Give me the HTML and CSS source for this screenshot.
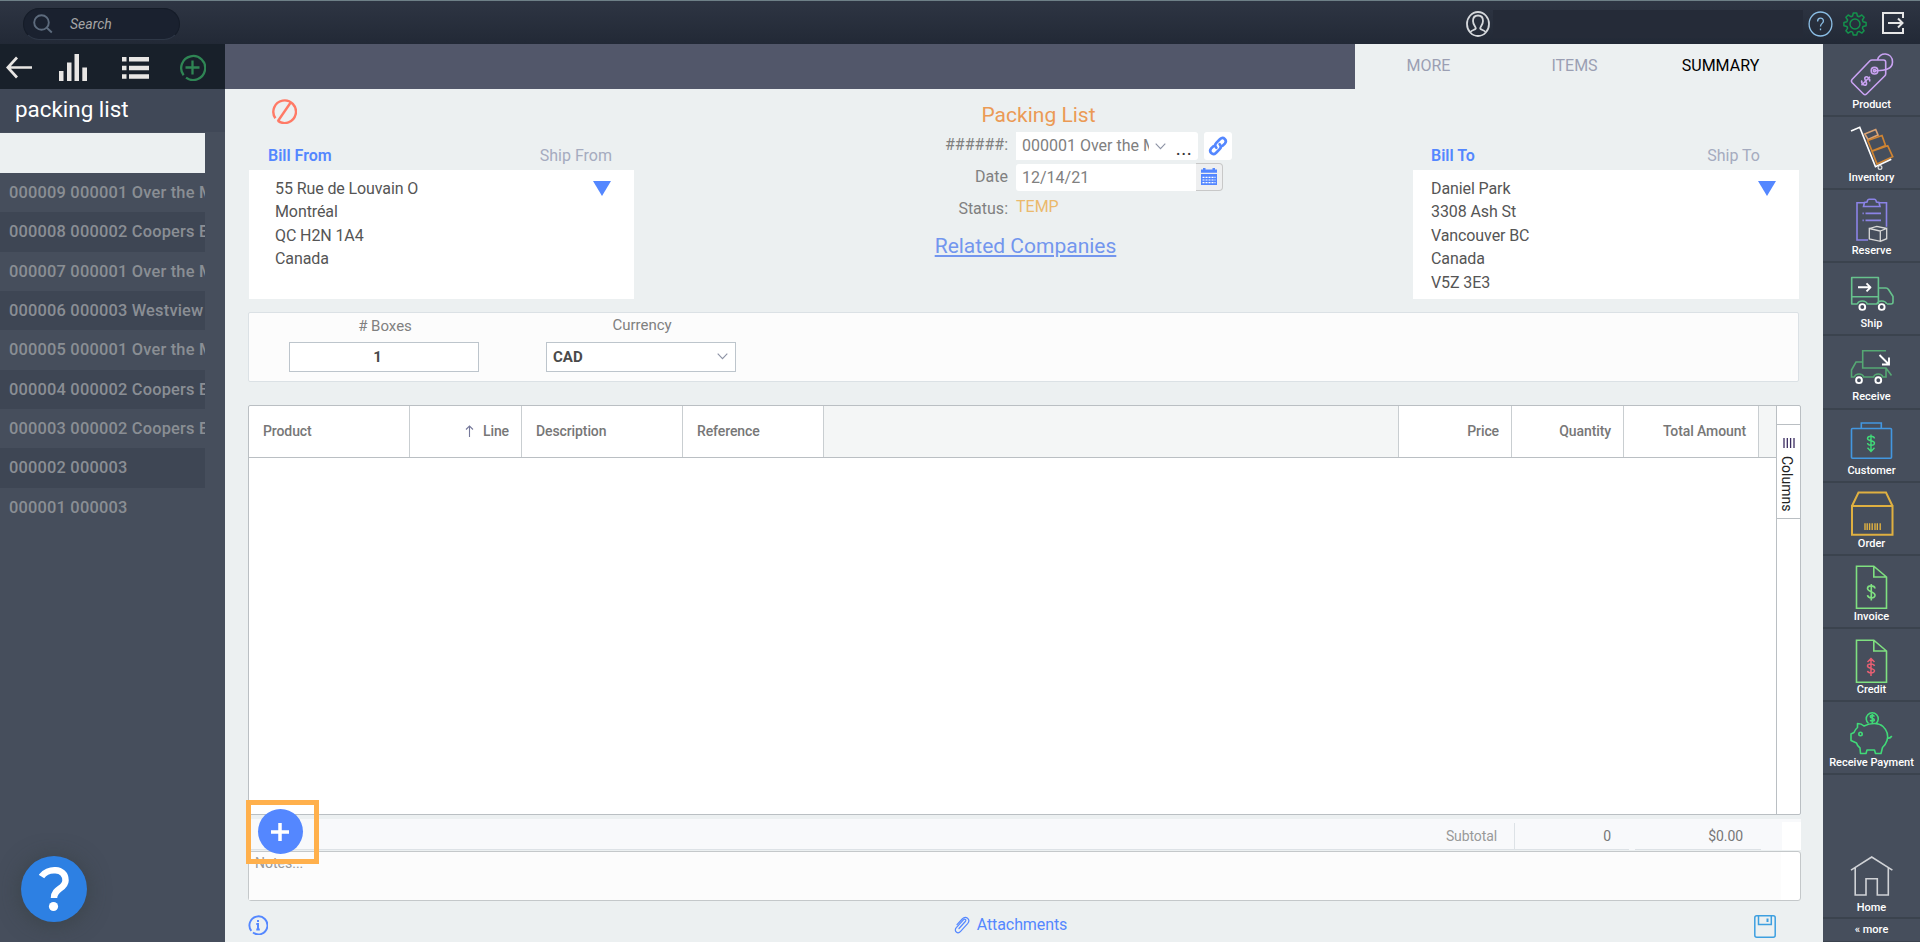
FILE: index.html
```html
<!DOCTYPE html>
<html lang="en">
<head>
    <meta charset="UTF-8">
    <meta name="viewport" content="width=device-width, initial-scale=1.0">
    <title>Packing List</title>
    <link rel="stylesheet" href="styles.css">
</head>
<body>
    <header class="topbar">
        <div class="search">
            <svg width="20" height="20" viewBox="0 0 20 20" fill="none" stroke="#5d6b7d" stroke-width="1.9"><circle cx="8.5" cy="8.5" r="7.3"/><path d="M13.8 13.8l5 4.7"/></svg>
            <span>Search</span>
        </div>
        <svg class="user" width="24" height="26" viewBox="0 0 24 26" fill="none" stroke="#d5d8dc" stroke-width="1.8"><ellipse cx="12" cy="13" rx="11" ry="12"/><path d="M4.500 21c1-2 4.500-2 5.300-3.500.300-1.500-2.800-3.500-2.800-7.500 0-3.500 2-5.500 5-5.500s5 2 5 5.500c0 4-3.100 6-2.800 7.500.800 1.500 4.300 1.500 5.300 3.500"/></svg>
        <div class="account"></div>
        <svg class="top-help" width="25" height="26" viewBox="0 0 25 26" fill="none" stroke="#8cbfe6" stroke-width="1.3"><ellipse cx="12.500" cy="13" rx="11.400" ry="12"/><path d="M9.600 10.400c0-4.300 5.800-4.300 5.800-.500 0 2.500-2.900 2.500-2.900 5.600M12.500 17.500v1.800"/></svg>
        <svg class="gear" width="24" height="24" viewBox="0 0 24 24" fill="none" stroke="#14924c" stroke-width="1.5" stroke-linejoin="round"><circle cx="12" cy="12" r="5"/><path d="M10.300 1h3.400l.7 3 1.700.7L18.800 3l2.300 2.300-1.700 2.700.7 1.700 3 .7v3.300l-3 .7-.7 1.700 1.700 2.700-2.300 2.300-2.700-1.700-1.700.7-.7 3h-3.400l-.7-3-1.700-.7-2.700 1.700-2.300-2.300 1.700-2.700-.7-1.700-3-.7v-3.300l3-.7.7-1.700-1.700-2.700L5.200 3l2.700 1.700 1.700-.7z"/></svg>
        <svg class="exit" width="24" height="24" viewBox="0 0 24 24" fill="none" stroke="#e6e6e6" stroke-width="2"><path d="M22 7V2H2v20h20v-5M7 12h14.500M17 7.500l4.500 4.500-4.500 4.500"/></svg>
    </header>

    <div class="layout">
        <aside class="sidebar">
            <div class="tools">
                <svg width="27" height="23" viewBox="0 0 27 23" fill="none" stroke="#e8e6e4" stroke-width="2.700"><path d="M26 11.500H2M11 1.500L1.800 11.500l9.200 10"/></svg>
                <svg width="28" height="27" viewBox="0 0 28 27" fill="#e8e6e4"><path d="M0 17h4.500v10H0zM8 8.500h4.500V27H8zM15.500 0H20v27h-4.500zM23.300 13.500H28V27h-4.700z"/></svg>
                <svg width="27" height="22" viewBox="0 0 27 22" fill="#e8e6e4"><path d="M0 0h4.500v4.500H0zM7 0h20v4.500H7zM0 8.700h4.500v4.500H0zM7 8.700h20v4.500H7zM0 17.300h4.500v4.500H0zM7 17.300h20v4.500H7z"/></svg>
                <svg width="27" height="27" viewBox="0 0 27 27" fill="none" stroke="#2f8554" stroke-width="2.300"><path d="M4.600 21.200A12 12 0 1 1 7 23.600M13.500 6.500v14M6.500 13.500h14"/></svg>
            </div>
            <h1>packing list</h1>
            <div class="filter"></div>
            <ul class="records">
                <li>000009 000001 Over the M</li>
                <li>000008 000002 Coopers B</li>
                <li>000007 000001 Over the M</li>
                <li>000006 000003 Westview</li>
                <li>000005 000001 Over the M</li>
                <li>000004 000002 Coopers B</li>
                <li>000003 000002 Coopers B</li>
                <li>000002 000003</li>
                <li>000001 000003</li>
            </ul>
            <div class="help-button">
                <svg width="30" height="46" viewBox="0 0 30 46"><path d="M2.500 10.500C8 2 26.500 1 26.500 14.500 26.500 23 15 22 15 32" fill="none" stroke="#fff" stroke-width="6.500"/><circle cx="14.500" cy="40.500" r="4.600" fill="#fff"/></svg>
            </div>
        </aside>

        <main class="main">
            <nav class="tabs">
                <a>MORE</a>
                <a>ITEMS</a>
                <a class="active">SUMMARY</a>
            </nav>

            <section class="doc-head">
                <div class="party from">
                    <div class="party-icon">
                        <svg width="25" height="25" viewBox="0 0 25 25" fill="none" stroke="#ff7a66" stroke-width="2.400"><path d="M3.400 19.200A11.300 11.300 0 1 1 5.800 21.700M5.800 22.300L18.500 3.800"/></svg>
                    </div>
                    <div class="party-tabs"><b>Bill From</b><span>Ship From</span></div>
                    <div class="address">
                        <p>55 Rue de Louvain O<br>Montréal<br>QC H2N 1A4<br>Canada</p>
                        <i class="arrow"></i>
                    </div>
                </div>

                <div class="doc-info">
                    <h2>Packing List</h2>
                    <div class="row">
                        <label>######:</label>
                        <div class="combo">
                            <span class="combo-text">000001 Over the M</span>
                            <svg width="11" height="7" viewBox="0 0 11 7" fill="none" stroke="#8d93a5" stroke-width="1.100"><path d="M.7.7l4.800 5 4.800-5"/></svg>
                            <span class="dots">...</span>
                        </div>
                        <div class="link">
                            <svg width="20" height="20" viewBox="0 0 20 20" fill="none" stroke="#5487ff" stroke-width="2.700" stroke-linecap="round"><path d="M8.300 11.700c-1.400-1.500-1.400-3.400 0-4.800l3.800-3.800c3.300-3 7.500 1.200 4.700 4.500l-2.300 2.300"/><path d="M11.700 8.300c1.400 1.500 1.400 3.400 0 4.800l-3.800 3.800c-3.300 3-7.500-1.200-4.700-4.500l2.300-2.300"/></svg>
                        </div>
                    </div>
                    <div class="row date-row">
                        <label>Date</label>
                        <div class="date">12/14/21</div>
                        <div class="calendar">
                            <svg width="16" height="17" viewBox="0 0 16 17"><path d="M0 1.500h2V0h2.500v1.500h7V0H14v1.500h2v3.200H0zM0 6h16v11H0z" fill="#5487ff"/><path d="M1.500 9.300h13M1.500 12h13M1.500 14.700h13" stroke="#fff" stroke-width="1.200" stroke-dasharray="2 1"/></svg>
                        </div>
                    </div>
                    <div class="row status-row">
                        <label>Status:</label>
                        <span class="status">TEMP</span>
                    </div>
                    <a class="related">Related Companies</a>
                </div>

                <div class="party to">
                    <div class="party-icon"></div>
                    <div class="party-tabs"><b>Bill To</b><span>Ship To</span></div>
                    <div class="address">
                        <p>Daniel Park<br>3308 Ash St<br>Vancouver BC<br>Canada<br>V5Z 3E3</p>
                        <i class="arrow"></i>
                    </div>
                </div>
            </section>

            <section class="options">
                <div class="field boxes">
                    <label># Boxes</label>
                    <div class="input">1</div>
                </div>
                <div class="field currency">
                    <label>Currency</label>
                    <div class="input">CAD
                        <svg width="11" height="7" viewBox="0 0 11 7" fill="none" stroke="#8d93a5" stroke-width="1.100"><path d="M.7.7l4.800 5 4.800-5"/></svg>
                    </div>
                </div>
            </section>

            <section class="grid">
                <div class="grid-main">
                    <div class="grid-head">
                        <div>Product</div>
                        <div class="num"><svg width="9" height="12" viewBox="0 0 9 12" fill="none" stroke="#75789a" stroke-width="1.100"><path d="M4.500 12V1M1 4.500L4.500 1 8 4.500"/></svg>Line</div>
                        <div>Description</div>
                        <div>Reference</div>
                        <div class="blank"></div>
                        <div class="num">Price</div>
                        <div class="num">Quantity</div>
                        <div class="num">Total Amount</div>
                        <div class="blank last"></div>
                    </div>
                </div>
                <div class="grid-side">
                    <div class="columns-button">
                        <svg width="12" height="10" viewBox="0 0 12 10" stroke="#3a2c60" stroke-width="1.300"><path d="M1 0v10M4.300 0v10M7.600 0v10M11 0v10"/></svg>
                        <span>Columns</span>
                    </div>
                </div>
            </section>

            <section class="totals">
                <div class="subtotal">Subtotal</div>
                <div class="qty">0</div>
                <div class="amount">$0.00</div>
                <div class="totals-end"></div>
            </section>

            <section class="notes">
                <div class="notes-text">Notes...</div>
            </section>

            <div class="highlight">
                <div class="add">
                    <svg width="18" height="18" viewBox="0 0 18 18" stroke="#fff" stroke-width="3.500"><path d="M9 0v18M0 9h18"/></svg>
                </div>
            </div>

            <footer class="bottom">
                <svg width="20" height="20" viewBox="0 0 20 20" fill="none" stroke="#5487ff" stroke-width="1.900"><path d="M3.300 15.800A9 9 0 1 1 5 17.500"/><path d="M8.300 8.900H10v5.600M8.300 14.500h3.500M10 5v2" stroke-width="2"/></svg>
                <a class="attachments">
                    <svg width="16" height="18" viewBox="0 0 16 18" fill="none" stroke="#5487ff" stroke-width="1.200" stroke-linecap="round"><path d="M5 12.500l6.300-7c1.500-1.800-.5-3.200-1.900-1.700L2.300 11.600c-3 3.600 1.500 6.900 4.300 3.800l7-7.800c3.500-4.200-1.800-8.600-5.400-4.600L3 8.600"/></svg>
                    Attachments
                </a>
                <svg class="save" width="22" height="23" viewBox="0 0 22 23" fill="none" stroke="#3d9fe0" stroke-width="1.500"><rect x=".8" y=".8" width="20.400" height="21.400" rx="2"/><path d="M4.500 1v8.500h12.800V1"/><path d="M13.500 3.500v3.500" stroke-width="2"/></svg>
            </footer>
        </main>

        <nav class="modules">
            <a>
                <svg width="48" height="48" viewBox="0 0 48 48" fill="none" stroke="#c9a2f2" stroke-width="1.600" stroke-linejoin="round"><path d="M4 29.500L22 10.800q.8-.8 2-.8h11.500q2.200 0 2.200 2.200v11.500q0 1.200-.8 2L18.500 44q-1.500 1.500-3 0L4 32.500q-1.300-1.500 0-3z"/><path d="M29.500 10C31 1.500 44.500 2 44.500 12c0 7-7.500 9-18 8.700"/><circle cx="26.500" cy="20.700" r="3.300"/><circle cx="26.500" cy="20.700" r="1.200"/><path transform="rotate(45 17.700 31)" d="M20.700 28.800c-.5-2.600-6-2.600-6 0s6 1.800 6 4.400-5.500 2.600-6 0M17.700 25v12"/></svg>
                <span>Product</span>
            </a>
            <a>
                <svg width="48" height="48" viewBox="0 0 48 48" fill="none" stroke-width="1.700"><path d="M16.700 11l11-4.500L30 12l-10 4.500z" stroke="#d9a273"/><path d="M19.700 17.500L34 12.500l3.500 10L24 28zM24 28.300l15.700-5.600 5 11L29 41z" stroke="#cf8432"/><path d="M3 8l8.700-3.700 15.800 39.400 15.800-7.400" stroke="#fff"/><circle cx="32" cy="44.500" r="1.900" stroke="#ddd" stroke-width="1.200"/></svg>
                <span>Inventory</span>
            </a>
            <a>
                <svg width="48" height="48" viewBox="0 0 48 48" fill="none" stroke="#8b83e6" stroke-width="1.600"><path d="M16 6.700H9v37.300h11M31 6.700h7.500v24"/><path d="M15.500 10.500l1-4 2.500-.5.500-1.500q.5-1.200 1.500-1.200h5.500q1 0 1.500 1.200l.5 1.500 2.500.5 1 4z"/><path d="M17.500 17.400h15.500M17.500 24.400h15.500M14.500 17.400h1.300M14.500 24.400h1.300"/><path d="M21.300 32.500l11 2.500v10.300l-11-2.300zM32.300 35l6.400-2.500v10.200l-6.400 2.600M21.300 32.500l7.500-2.200 9.900 2.200" stroke="#d9d9d9" stroke-width="1.300"/></svg>
                <span>Reserve</span>
            </a>
            <a>
                <svg width="48" height="48" viewBox="0 0 48 48" fill="none" stroke="#67c28d" stroke-width="1.600" stroke-linejoin="round"><path d="M9.500 35H3.700V8.500h26.700V35M3.700 27.800h26.700M30.400 19H38q1.500 0 2.500 1.500L45 27.500V33q0 2-2 2h-4M9.500 35c1-4 8.500-4 9.700 0h9.700c1-4 8.500-4 9.700 0"/><g stroke="#fff" stroke-width="1.900"><circle cx="14.300" cy="38" r="2.900"/><circle cx="33.700" cy="38" r="2.900"/><path d="M10 18.300h12.500M18.500 14.300l4 4-4 4"/></g></svg>
                <span>Ship</span>
            </a>
            <a>
                <svg width="48" height="48" viewBox="0 0 48 48" fill="none" stroke="#55a873" stroke-width="1.600"><path d="M38 8.700H14.700V26H38l5.500 7.500M14.700 20H8L3.500 28v7h3M6.500 35c1-4 8-4 9.200 0h10c1-4 8-4 9.200 0H38v-9"/><g stroke="#fff" stroke-width="1.900"><circle cx="11" cy="38.200" r="2.900"/><circle cx="30.300" cy="38.200" r="2.900"/><path d="M31.500 13l9.500 9.500M41 15.500v7h-7"/></g></svg>
                <span>Receive</span>
            </a>
            <a>
                <svg width="48" height="48" viewBox="0 0 48 48" fill="none" stroke="#4397e0" stroke-width="1.600"><rect x="3.500" y="12.500" width="40" height="29.700" rx="1"/><path d="M13.300 12V7h20v5"/><path d="M26.500 22.500c-.500-3-7-3-7 0s7 1.500 7 4.500-6.500 3-7 0M23 18.500v17M19.500 31.700l3.500 3.800 3.500-3.800" stroke="#41d978" stroke-width="1.400"/></svg>
                <span>Customer</span>
            </a>
            <a>
                <svg width="48" height="48" viewBox="0 0 48 48" fill="none" stroke="#dfb041" stroke-width="2"><path d="M4 17h40.500v28.700H4zM4 17l6.500-13.500H38L44.500 17"/><path d="M17 34.300v6.700M19.200 34.300v6.700M21.600 34.300v6.700M24.200 34.300v6.700M27 34.300v6.700M29.300 34.300v6.700M32.200 34.300v6.700" stroke-width="1.400"/></svg>
                <span>Order</span>
            </a>
            <a>
                <svg width="48" height="48" viewBox="0 0 48 48" fill="none" stroke="#7fe080" stroke-width="1.600"><path d="M8.500 4.200h17.300L38.500 15v31.200h-30zM25.800 4.200V15h12.700"/><path d="M27 26.500c-.5-3.500-7.500-3.500-7.500 0s7.500 3 7.500 6.700-7 3.500-7.500 0M23.300 22v16.500"/></svg>
                <span>Invoice</span>
            </a>
            <a>
                <svg width="48" height="48" viewBox="0 0 48 48" fill="none" stroke="#7fe080" stroke-width="1.600"><path d="M8.500 5.200h17.300L38.500 16v31.200h-30zM25.800 5.200V16h12.700"/><path d="M26.500 31c-.5-2.700-7-2.700-7 0s7 2 7 4.800-6.500 2.700-7 0M23 23.500V41M19.500 27l3.500-3.500 3.500 3.500" stroke="#e65f72" stroke-width="1.500"/></svg>
                <span>Credit</span>
            </a>
            <a>
                <svg width="48" height="48" viewBox="0 0 48 48" fill="none" stroke="#41d978" stroke-width="1.600" stroke-linejoin="round"><path d="M20.500 15.500a6 6 0 1 1 7.500 0M26.300 8.700c-.3-1.800-4-1.800-4 0s4 1.300 4 3.200-3.700 1.800-4 0M24.300 6v9"/><path d="M16 18c7-3.500 15-3.300 19 .5 4.500 4.300 5.500 9 4 14-.8 2.500-2.500 5-4.500 7L33 45.500h-5.500L26.500 42h-7.500l-1 3.500h-5.500L12 40c-2-1.500-3-3-3.500-5L3 32.500V26l3-1.500c.7-2.200 2-3.800 3.500-5V15.500c2.500 0 5 1 6.500 2.500zM39.800 30c1.500.5 3-.5 4-2"/><circle cx="12.500" cy="26" r="1.700"/></svg>
                <span>Receive Payment</span>
            </a>
            <a class="home">
                <svg width="48" height="48" viewBox="0 0 48 48" fill="none" stroke="#d0d2d6" stroke-width="1.600"><path d="M3 20.200L23.700 7l20.700 13.200M7.200 18v27H18V28.700h11.300V45h11V18"/></svg>
                <span>Home</span>
            </a>
            <div class="more">« more</div>
        </nav>
    </div>
</body>
</html>
```

FILE: styles.css
```css
* {
    box-sizing: border-box;
}

body {
    margin: 0;
    width: 1920px;
    height: 942px;
    overflow: hidden;
    font-family: Roboto, sans-serif;
    font-size: 16px;
    color: #808080;
    background: #ecf0f1;
}

svg {
    display: block;
    flex: none;
}

h1, h2, p, ul {
    margin: 0;
    padding: 0;
    font-weight: 400;
}

/* top bar */
.topbar {
    display: flex;
    align-items: center;
    height: 44px;
    padding: 3px 15px 0 23px;
    border-top: 1px solid #6e8087;
    background: linear-gradient(#2e3543, #222936);
}

.search {
    display: flex;
    align-items: center;
    gap: 17px;
    width: 157px;
    height: 32px;
    padding-left: 9px;
    margin-top: -1px;
    border: 1px solid #151c28;
    border-bottom-color: #2e3746;
    border-radius: 16px;
    background: #1a212f;
    font-size: 14px;
    font-style: italic;
    color: #a5a5a5;
}

.user {
    margin-left: 1286px;
}

.account {
    width: 310px;
    height: 28px;
    margin-left: 3px;
    background: #252b38;
}

.top-help {
    margin-left: 5px;
}

.gear {
    margin-left: 10px;
}

.exit {
    margin-left: 14px;
    margin-top: -3px;
}

.layout {
    display: flex;
    height: 898px;
}

/* left list */
.sidebar {
    position: relative;
    width: 225px;
    background: #464e5c;
}

.tools {
    display: flex;
    align-items: center;
    height: 45px;
    padding: 2px 0 0 6px;
    background: #18202a;
}

.tools svg:nth-child(2) {
    margin-left: 26px;
}

.tools svg:nth-child(3) {
    margin-left: 35px;
}

.tools svg:nth-child(4) {
    margin-left: 30px;
}

.sidebar h1 {
    height: 43px;
    padding-left: 15px;
    line-height: 41px;
    font-size: 22.4px;
    color: #fff;
    background: #404857;
}

.filter {
    width: 205px;
    height: 40px;
    margin-top: 1px;
    background: #ecf0f1;
}

.records {
    width: 205px;
    list-style: none;
}

.records li {
    height: 39.33px;
    padding-left: 9px;
    line-height: 40px;
    font-size: 16.4px;
    font-weight: 500;
    letter-spacing: 0.2px;
    color: #8a8e94;
    white-space: nowrap;
    overflow: hidden;
}

.records li:nth-child(even) {
    background: #3e4654;
}

.help-button {
    position: absolute;
    left: 21px;
    bottom: 20px;
    display: flex;
    align-items: center;
    justify-content: center;
    width: 66px;
    height: 66px;
    border-radius: 50%;
    background: #2d80e3;
    box-shadow: 0 2px 22px rgba(50, 60, 60, 0.6);
}

/* document */
.main {
    position: relative;
    width: 1598px;
    background: #ecf0f1;
}

.tabs {
    display: flex;
    height: 45px;
    padding-right: 30px;
    padding-left: 1130px;
    background: linear-gradient(90deg, #52576a 1130px, #ecf0f1 1130px);
}

.tabs a {
    width: 146px;
    padding-left: 1px;
    line-height: 44px;
    text-align: center;
    color: #9b9fb3;
}

.tabs .active {
    color: #000;
}

.doc-head {
    display: flex;
    height: 223px;
    padding: 10px 24px 0;
}

.party {
    width: 385px;
}

.party-icon {
    height: 46px;
    padding-left: 23px;
}

.party-tabs {
    display: flex;
    justify-content: space-between;
    height: 25px;
    padding: 0 22px 0 19px;
    line-height: 22px;
    color: #a5abbf;
}

.party-tabs b {
    font-weight: 600;
    color: #5487ff;
}

.address {
    display: flex;
    justify-content: space-between;
    height: 129px;
    padding: 7px 23px 0 26px;
    background: #fff;
    line-height: 23.4px;
    letter-spacing: -0.1px;
    color: #555;
}

.arrow {
    margin-top: 4px;
    width: 18px;
    height: 15px;
    background: #5487ff;
    clip-path: polygon(0 0, 100% 0, 50% 100%);
}

.to {
    width: 386px;
}

.to .party-tabs {
    padding: 0 39px 0 18px;
}

.to .address {
    padding-left: 18px;
}

.doc-info {
    width: 779px;
    padding-top: 2px;
}

.doc-info h2 {
    height: 31px;
    padding-left: 30px;
    line-height: 28px;
    font-size: 21px;
    text-align: center;
    color: #eb9a55;
}

.row {
    display: flex;
    height: 31px;
}

.row label {
    width: 374px;
    margin-right: 8px;
    line-height: 26px;
    text-align: right;
}

.date-row label {
    line-height: 27px;
}

.combo {
    display: flex;
    align-items: center;
    width: 182px;
    height: 28px;
    padding-left: 6px;
    border-radius: 0 3px 3px 0;
    background: #fff;
}

.combo-text {
    width: 127px;
    margin-right: 6px;
    line-height: 26px;
    overflow: hidden;
    white-space: nowrap;
}

.dots {
    margin-left: 10px;
    padding-top: 6px;
    letter-spacing: 1px;
    color: #333;
    font-weight: 500;
}

.link {
    display: flex;
    align-items: center;
    justify-content: center;
    width: 28px;
    height: 28px;
    margin-left: 6px;
    border-radius: 3px;
    background: #fff;
}

.date {
    width: 180px;
    height: 27px;
    margin-top: 1px;
    padding-left: 6px;
    border-radius: 3px 0 0 3px;
    background: #fff;
    line-height: 27px;
}

.calendar {
    display: flex;
    align-items: center;
    justify-content: center;
    width: 27px;
    height: 28px;
    padding: 0 1px 2px 0;
    border: 1px solid #c8c8c8;
    border-left: 0;
    border-radius: 0 4px 4px 0;
    background: #eeeff0;
}

.status-row label {
    line-height: 29px;
}

.status {
    line-height: 25px;
    color: #ebb96c;
}

.related {
    display: block;
    margin-top: 5px;
    padding-left: 4px;
    line-height: 32px;
    font-size: 21px;
    text-align: center;
    color: #7396ee;
    text-decoration: underline;
}

.options {
    display: flex;
    gap: 67px;
    width: 1551px;
    height: 70px;
    margin-left: 23px;
    padding-left: 40px;
    border: 1px solid #dbe1e5;
    border-radius: 2px;
    background: #fcfcfc;
}

.field {
    width: 190px;
}

.field label {
    display: block;
    height: 29px;
    line-height: 26px;
    font-size: 15px;
    text-align: center;
}

.currency label {
    padding-left: 2px;
    line-height: 25px;
}

.boxes label {
    padding-left: 2px;
}

.input {
    display: flex;
    align-items: center;
    justify-content: space-between;
    height: 30px;
    padding: 0 7px 1px 6px;
    border: 1px solid #bdc5cc;
    background: #fff;
    font-size: 15px;
    font-weight: 700;
    color: #4a4a4a;
}

.boxes .input {
    justify-content: center;
    padding-right: 19px;
}

/* item grid */
.grid {
    display: flex;
    width: 1553px;
    height: 410px;
    margin: 23px 0 0 23px;
    border: 1px solid #babfc3;
    border-radius: 2px;
    background: #fff;
}

.grid-main {
    flex: none;
    width: 1528px;
    border-right: 1px solid #babfc3;
}

.grid-head {
    display: grid;
    grid-template-columns: 161px 112px 161px 141px 575px 113px 112px 135px 1fr;
    height: 52px;
    border-bottom: 1px solid #babfc3;
}

.grid-head div {
    display: flex;
    align-items: center;
    padding: 0 12px 1px 14px;
    border-right: 1px solid #c9ced1;
    font-size: 14px;
    font-weight: 500;
    letter-spacing: -0.1px;
    color: #777;
}

.grid-head .num {
    justify-content: flex-end;
}

.grid-head .num svg {
    margin-right: 9px;
}

.grid-head .blank {
    padding: 0;
    background: #f4f6f6;
}

.grid-head .last {
    border: 0;
}

.grid-side {
    flex: 1;
    padding-top: 18px;
}

.columns-button {
    display: flex;
    flex-direction: column;
    align-items: center;
    height: 95px;
    padding-top: 13px;
    border: solid #babfc3;
    border-width: 1px 0;
    color: #222;
    font-size: 14px;
}

.columns-button span {
    margin: 8px 4px 0 0;
    line-height: 16px;
    writing-mode: vertical-rl;
}

.totals {
    display: flex;
    width: 1553px;
    height: 31px;
    margin: 4px 0 0 23px;
    background: #f8f9fb;
    font-size: 14px;
    line-height: 34px;
    text-align: right;
    color: #777;
}

.subtotal {
    width: 1266px;
    padding-right: 17px;
    border-bottom: 1px solid #dde2e6;
    letter-spacing: -0.1px;
    color: #999;
}

.qty {
    width: 115px;
    height: 27px;
    margin-top: 4px;
    padding-right: 18px;
    border: solid #dde2e6;
    border-width: 0 0 1px 1px;
    line-height: 26px;
}

.amount {
    width: 126px;
    margin-left: 6px;
    padding-right: 18px;
    border-bottom: 1px solid #dde2e6;
    letter-spacing: -0.1px;
}

.totals-end {
    width: 19px;
    margin: 3px 0 0 auto;
    background: #fff;
}

.notes {
    width: 1553px;
    height: 50px;
    margin: 1px 0 0 23px;
    padding-right: 19px;
    border: 1px solid #c4c8ca;
    border-radius: 3px;
    background: #fff;
}

.notes-text {
    height: 48px;
    padding-left: 6px;
    background: #fcfcfc;
    line-height: 23px;
    font-size: 14px;
    color: #999;
}

.highlight {
    position: absolute;
    left: 21px;
    top: 756px;
    width: 73px;
    height: 64px;
    padding: 4px 7px;
    border: 5px solid #ffb04c;
}

.add {
    display: flex;
    align-items: center;
    justify-content: center;
    width: 45px;
    height: 45px;
    padding-right: 1px;
    border-radius: 50%;
    background: #5487ff;
}

.bottom {
    display: flex;
    align-items: flex-start;
    justify-content: space-between;
    padding: 14px 47px 0 23px;
}

.attachments {
    display: flex;
    align-items: center;
    gap: 7px;
    margin-left: -1px;
    letter-spacing: -0.1px;
    color: #5487ff;
}

/* module bar */
.modules {
    display: flex;
    flex-direction: column;
    width: 97px;
    background: #464e5c;
    font-size: 11px;
    font-weight: 500;
    color: #fff;
}

.modules a {
    display: flex;
    flex-direction: column;
    align-items: center;
    height: 73.12px;
    padding-top: 6px;
    border-bottom: 2px solid #3b434e;
}

.modules span {
    line-height: 13px;
}

.modules .home {
    height: 72px;
    margin-top: auto;
    padding-top: 3px;
}

.modules .home span {
    line-height: 19px;
}

.more {
    height: 23px;
    line-height: 21px;
    text-align: center;
    border-bottom: 1px solid #3b434e;
}
```
